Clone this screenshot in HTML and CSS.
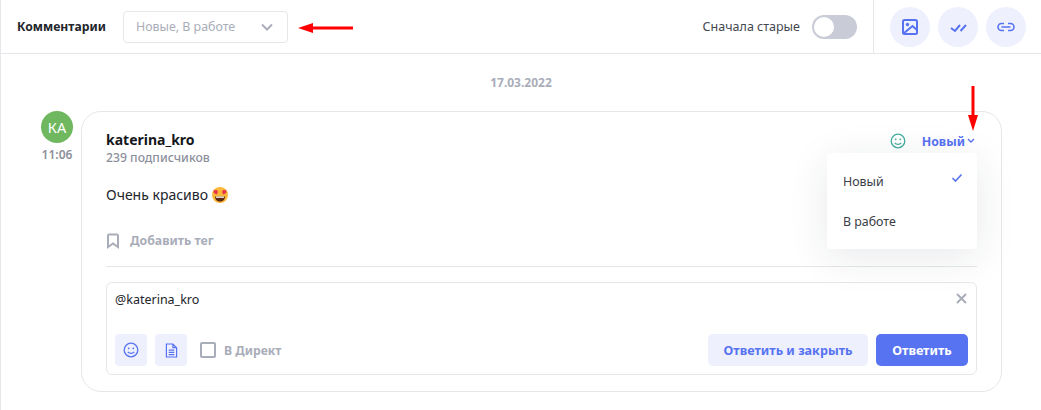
FILE: index.html
```html
<!DOCTYPE html>
<html lang="ru">
<head>
  <meta charset="UTF-8">
  <title>Комментарии</title>
  <link rel="stylesheet" href="styles.css">
</head>
<body>
  <div class="page">
    <div class="topbar">
      <div class="topbar-left">
        <span class="topbar-title">Комментарии</span>
        <div class="filter">
          <span>Новые, В работе</span>
          <svg width="12" height="12" viewBox="0 0 12 12" fill="none" stroke="#a9adb9" stroke-width="2"><path d="M1 3.500 6 8.500 11 3.500"/></svg>
        </div>
      </div>
      <div class="topbar-sort">
        <span>Сначала старые</span>
        <div class="toggle"><div class="toggle-knob"></div></div>
      </div>
      <div class="topbar-actions">
        <div class="round-btn">
          <svg width="20" height="20" viewBox="0 0 20 20" fill="none" stroke="#5773f1" stroke-width="2"><rect x="3" y="3" width="14" height="14" rx="1.500"/><circle cx="7.500" cy="7.500" r="1.700" fill="#5773f1" stroke="none"/><path d="M3.500 16.500 12.500 9 17 13"/></svg>
        </div>
        <div class="round-btn">
          <svg width="20" height="20" viewBox="0 0 20 20" fill="none" stroke="#5773f1" stroke-width="2"><path d="M3 11 7 14 12 8"/><path d="M12.500 14 18 8"/></svg>
        </div>
        <div class="round-btn">
          <svg width="20" height="20" viewBox="0 0 20 20" fill="none" stroke="#5773f1" stroke-width="1.600"><path d="M8 6.500H5.500a3.500 3.500 0 0 0 0 7H8M12 6.500h2.500a3.500 3.500 0 0 1 0 7H12M5.500 10h9"/></svg>
        </div>
      </div>
    </div>

    <div class="date">17.03.2022</div>

    <div class="comment">
      <div class="comment-side">
        <div class="avatar">КА</div>
        <div class="time">11:06</div>
      </div>
      <div class="card">
        <div class="card-head">
          <div>
            <div class="author">katerina_kro</div>
            <div class="followers">239 подписчиков</div>
          </div>
          <div class="status">
            <svg width="16" height="16" viewBox="0 0 16 16" fill="none" stroke="#45ad9f" stroke-width="1.300"><circle cx="8" cy="8" r="6.800"/><circle cx="5.700" cy="6.300" r=".9" fill="#45ad9f" stroke="none"/><circle cx="10.300" cy="6.300" r=".9" fill="#45ad9f" stroke="none"/><path d="M4.800 9.800c1.600 2 4.800 2 6.400 0"/></svg>
            <span class="status-label">Новый</span>
            <svg width="8" height="6" viewBox="0 0 8 6" fill="none" stroke="#5773f1" stroke-width="1.400"><path d="M1 1 4 4 7 1"/></svg>
          </div>
        </div>
        <div class="comment-text">Очень красиво
          <svg class="emoji" width="16" height="16" viewBox="0 0 16 16"><circle cx="8" cy="8" r="8" fill="#fbb737"/><path d="M3 9.500h10c0 3-2.200 5-5 5s-5-2-5-5z" fill="#5a2a14"/><path d="M4 9.500h8v1.300H4z" fill="#fff"/><path d="M3.800 3.200c-1-.6-2.500.2-2.300 1.700.2 1.200 1.700 2.100 3.300 2.500.8-1.200 1.300-2.800.7-3.700-.4-.6-1.200-.8-1.700-.5zM12.200 3.200c1-.6 2.500.2 2.300 1.700-.2 1.200-1.700 2.100-3.300 2.500-.8-1.200-1.300-2.800-.7-3.700.4-.6 1.200-.8 1.700-.5z" fill="#e8344a"/></svg>
        </div>
        <div class="add-tag">
          <svg width="14" height="16" viewBox="0 0 14 16" fill="none" stroke="#a9adb9" stroke-width="2"><path d="M2 2.500a1 1 0 0 1 1-1h8a1 1 0 0 1 1 1v11.500l-5-3.500-5 3.500z"/></svg>
          <span>Добавить тег</span>
        </div>
        <div class="reply">
          <div class="reply-top">
            <span>@katerina_kro</span>
            <svg class="reply-close" width="11" height="11" viewBox="0 0 11 11" fill="none" stroke="#a9adb9" stroke-width="2"><path d="M1 1 10 10M10 1 1 10"/></svg>
          </div>
          <div class="reply-bottom">
            <div class="square-btn">
              <svg width="16" height="16" viewBox="0 0 16 16" fill="none" stroke="#5773f1" stroke-width="1.300"><circle cx="8" cy="8" r="6.800"/><circle cx="5.700" cy="6.300" r=".9" fill="#5773f1" stroke="none"/><circle cx="10.300" cy="6.300" r=".9" fill="#5773f1" stroke="none"/><path d="M4.800 9.800c1.600 2 4.800 2 6.400 0"/></svg>
            </div>
            <div class="square-btn">
              <svg width="13" height="15" viewBox="0 0 14 16" fill="none" stroke="#5773f1" stroke-width="1.300"><path d="M1.500 1h7l4 4v10h-11zM8.500 1v4h4M4 7.500h6M4 10h6M4 12.500h6"/></svg>
            </div>
            <label class="direct"><span class="checkbox"></span>В Директ</label>
            <div class="reply-actions">
              <button class="btn btn-light">Ответить и закрыть</button>
              <button class="btn btn-primary">Ответить</button>
            </div>
          </div>
        </div>
      </div>
    </div>

    <div class="status-menu">
      <div class="status-item">Новый
        <svg width="12" height="10" viewBox="0 0 12 10" fill="none" stroke="#5773f1" stroke-width="1.600"><path d="M1.500 5 4.500 8 10.500 1.500"/></svg>
      </div>
      <div class="status-item">В работе</div>
    </div>

    <svg class="arrow arrow-filter" width="56" height="10" viewBox="0 0 56 10"><path d="M12 5H55" stroke="#f00" stroke-width="3"/><path d="M0 5 15 0V10z" fill="#f00"/></svg>
    <svg class="arrow arrow-status" width="10" height="45" viewBox="0 0 10 45"><path d="M5 0V32" stroke="#f00" stroke-width="3"/><path d="M5 45 0 29H10z" fill="#f00"/></svg>
  </div>
</body>
</html>
```

FILE: styles.css
```css
/* Reset and base styles */
* {
  box-sizing: border-box;
  margin: 0;
  padding: 0;
}

:root {
  --primary: #5773f1;
  --primary-light: #eef0fd;
  --border: #e6e7eb;
  --muted: #a9adb9;
  --text: #22252b;
}

body {
  font-family: "Noto Sans", sans-serif;
  font-size: 13px;
  color: var(--text);
  background-color: #fff;
  overflow: hidden;
}

.page {
  position: relative;
  height: 410px;
  border-left: 1px solid var(--border);
}

/* Top bar */
.topbar {
  display: flex;
  align-items: center;
  height: 54px;
  border-bottom: 1px solid var(--border);
}

.topbar-left {
  display: flex;
  align-items: center;
  gap: 16px;
  padding-left: 16px;
  flex: 1;
}

.topbar-title {
  font-weight: 700;
  font-size: 12.2px;
  width: 90px;
}

.filter {
  display: flex;
  align-items: center;
  justify-content: space-between;
  width: 165px;
  height: 32px;
  padding: 0 14px 0 12px;
  border: 1px solid var(--border);
  border-radius: 4px;
  font-size: 12.4px;
  color: var(--muted);
}

.topbar-sort {
  display: flex;
  align-items: center;
  gap: 12px;
  padding-right: 16px;
  height: 100%;
  font-size: 12.5px;
  color: #444851;
}

.toggle {
  width: 45px;
  height: 24px;
  padding: 2px;
  border-radius: 12px;
  background-color: #c9ccd6;
}

.toggle-knob {
  width: 20px;
  height: 20px;
  border-radius: 50%;
  background-color: #fff;
}

.topbar-actions {
  display: flex;
  align-items: center;
  gap: 8px;
  height: 100%;
  padding: 0 15px 0 16px;
  border-left: 1px solid var(--border);
}

.round-btn {
  display: flex;
  align-items: center;
  justify-content: center;
  width: 40px;
  height: 40px;
  border-radius: 50%;
  background-color: var(--primary-light);
}

/* Comment */
.date {
  margin-top: 20px;
  text-align: center;
  font-size: 12px;
  font-weight: 700;
  color: var(--muted);
  line-height: 18px;
}

.comment {
  display: flex;
  gap: 8px;
  margin: 19px 39px 0 40px;
}

.comment-side {
  width: 32px;
  text-align: center;
}

.avatar {
  display: flex;
  align-items: center;
  justify-content: center;
  width: 32px;
  height: 32px;
  border-radius: 50%;
  background-color: #6fb85f;
  color: #fff;
  font-size: 14.5px;
}

.time {
  margin-top: 4px;
  font-size: 12px;
  font-weight: 600;
  line-height: 16px;
  color: #8b8f9b;
}

.card {
  flex: 1;
  height: 281px;
  padding: 18px 24px 0;
  border: 1px solid var(--border);
  border-radius: 20px;
}

.card-head {
  display: flex;
  justify-content: space-between;
}

.author {
  font-size: 14px;
  font-weight: 700;
  line-height: 20px;
  color: #15171c;
}

.followers {
  font-size: 12.2px;
  font-weight: 500;
  line-height: 16px;
  color: #8b8f9b;
}

.status {
  display: flex;
  align-items: center;
  height: 20px;
  margin: 1px 2px 0 0;
  color: var(--primary);
  font-weight: 700;
  font-size: 12.3px;
}

.status-label {
  margin: 0 2px 0 16px;
}

.comment-text {
  margin-top: 19px;
  line-height: 20px;
  font-size: 14px;
}

.emoji {
  vertical-align: -3px;
}

.add-tag {
  display: flex;
  align-items: center;
  gap: 10px;
  margin-top: 28px;
  padding-bottom: 17px;
  border-bottom: 1px solid var(--border);
  color: var(--muted);
  font-size: 12.3px;
  font-weight: 700;
  line-height: 16px;
}

/* Reply box */
.reply {
  height: 93px;
  margin-top: 15px;
  padding: 7px 8px 8px;
  border: 1px solid var(--border);
  border-radius: 6px;
}

.reply-top {
  display: flex;
  justify-content: space-between;
  align-items: center;
  height: 18px;
  padding-right: 1px;
  font-size: 12.5px;
}

.reply-close {
  margin-top: -2px;
}

.reply-bottom {
  display: flex;
  align-items: center;
  gap: 8px;
  margin-top: 26px;
}

.square-btn {
  display: flex;
  align-items: center;
  justify-content: center;
  width: 32px;
  height: 32px;
  border-radius: 4px;
  background-color: var(--primary-light);
}

.direct {
  display: flex;
  align-items: center;
  gap: 8px;
  margin-left: 5px;
  color: var(--muted);
  font-size: 12.2px;
  font-weight: 700;
}

.checkbox {
  width: 16px;
  height: 16px;
  border: 2px solid var(--muted);
  border-radius: 2px;
}

.reply-actions {
  display: flex;
  gap: 8px;
  margin-left: auto;
}

.btn {
  height: 32px;
  border: 0;
  border-radius: 5px;
  font-family: inherit;
  font-size: 12.6px;
  font-weight: 700;
}

.btn-light {
  width: 160px;
  color: var(--primary);
  background-color: var(--primary-light);
}

.btn-primary {
  width: 92px;
  color: #fff;
  background-color: var(--primary);
}

/* Status menu */
.status-menu {
  position: absolute;
  top: 153px;
  left: 826px;
  width: 150px;
  height: 96px;
  padding: 8px 0;
  border-radius: 4px;
  background-color: #fff;
  box-shadow: 0 8px 40px rgba(30, 35, 60, 0.1);
}

.status-item {
  display: flex;
  justify-content: space-between;
  align-items: center;
  height: 40px;
  padding: 0 16px;
  font-size: 12.4px;
  color: #3a3d45;
}

.status-item svg {
  margin-top: -6px;
  margin-right: -2px;
}

/* Red annotations */
.arrow {
  position: absolute;
}

.arrow-filter {
  top: 23px;
  left: 297px;
}

.arrow-status {
  top: 86px;
  left: 967px;
}
```
